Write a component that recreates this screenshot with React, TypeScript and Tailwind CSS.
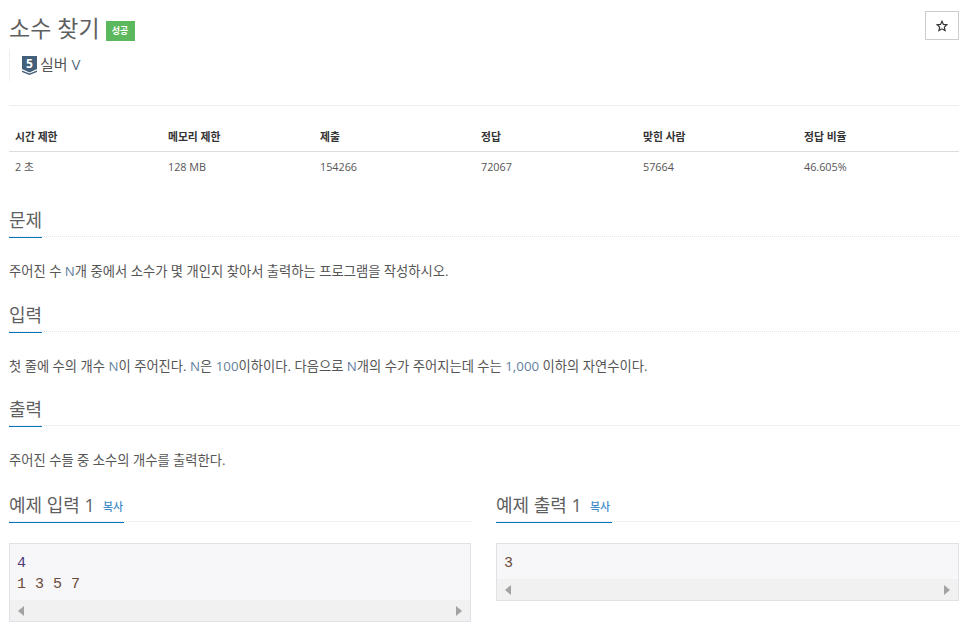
const font = "font-['Open_Sans','Noto_Sans_CJK_KR',sans-serif]"

const stats = [
  { label: "시간 제한", value: "2 초", width: "w-[153px]" },
  { label: "메모리 제한", value: "128 MB", width: "w-[152px]" },
  { label: "제출", value: "154266", width: "w-[161px]" },
  { label: "정답", value: "72067", width: "w-[162px]" },
  { label: "맞힌 사람", value: "57664", width: "w-[161px]" },
  { label: "정답 비율", value: "46.605%", width: "flex-1" },
]

function Headline({ title, accent, copy }: { title: string; accent: string; copy?: boolean }) {
  return (
    <div className="border-b border-dotted border-[#e5e5e5]">
      <h2 className={`-mb-[2px] block whitespace-nowrap border-b border-[#0076c0] text-[18px] leading-[28px] text-[#5f5f5f] ${copy ? "pb-[1px]" : "pb-[3px]"} ${accent}`}>
        {title}
        {copy && <a className="ml-2 align-[1px] text-[11px] font-medium text-[#428bca]">복사</a>}
      </h2>
    </div>
  )
}

function Num({ children }: { children: string }) {
  return <span className="text-[#5f7f9f]">{children}</span>
}

function Arrow({ flip }: { flip?: boolean }) {
  return (
    <svg width="6" height="10" viewBox="0 0 6 10" className={flip ? "rotate-180" : ""}>
      <path d="M6 0v10L0 5z" fill="#a3a3a3" />
    </svg>
  )
}

function Sample({ lines }: { lines: string[] }) {
  return (
    <div className="mt-[21px] border border-[#e1e1e8] bg-[#f7f7f9]">
      <pre className="px-[7px] pb-[5px] pt-[9px] font-['Liberation_Mono',monospace] text-[15px] leading-[21px] text-[#333333]">
        {lines.map((line, i) => (
          <div key={i} className={i === 0 && lines.length > 1 ? "text-[#4b3a7c]" : "text-[#6b4a3a]"}>{line}</div>
        ))}
      </pre>
      <div className="flex h-[21px] items-center justify-between bg-[#f1f1f1] px-[8px]">
        <Arrow />
        <Arrow flip />
      </div>
    </div>
  )
}

export default function App() {
  return (
    <div className={`${font} min-h-[638px] w-[980px] overflow-hidden bg-white px-[9px] pt-[9px] text-[#555555]`}>
      <div className="w-[950px]">
        <div className="flex items-start justify-between">
          <div className="flex h-[37px] items-center">
            <h1 className="text-[23px] leading-[36px] text-[#5f5f5f]">소수 찾기</h1>
            <span className="ml-[6px] mt-[6px] flex h-[20px] w-[29px] items-center justify-center bg-[#5cb85c] text-[9px] font-bold text-white">성공</span>
          </div>
          <button className="mt-[2px] flex h-[29px] w-[34px] items-center justify-center border border-[#cccccc] bg-white text-[#333333]">
            <svg width="12" height="12" viewBox="0 0 24 24" fill="none" stroke="#333" strokeWidth="2.4">
              <path d="M12 2.5l2.9 6.3 6.9.8-5.1 4.7 1.4 6.8-6.1-3.4-6.1 3.4 1.4-6.8-5.1-4.7 6.9-.8z" />
            </svg>
          </button>
        </div>

        <div className="mt-[3px] flex h-[32px] items-center border-l border-[#eeeeee] pl-[12px]">
          <svg width="15" height="19" viewBox="0 0 15 19">
            <path d="M0 0h15v13l-7.5 3.5L0 13z" fill="#435f7a" />
            <path d="M0 14.5l7.5 3 7.5-3V16l-7.5 3L0 16z" fill="#435f7a" />
            <text x="7.5" y="11.5" textAnchor="middle" fontSize="12" fontWeight="700" fill="#fff" fontFamily="Open Sans">5</text>
          </svg>
          <span className="ml-[3px] pb-[2px] text-[15px] text-[#555555]">실버 <span className="text-[#5a6f85]">V</span></span>
        </div>

        <div className="mt-[24px] border-t border-[#eeeeee]" />

        <div className="mt-[19px]">
          <div className="flex h-[27px] items-center border-b border-[#dddddd] pb-[2px] text-[10.8px] font-bold text-[#333333]">
            {stats.map((s) => (
              <div key={s.label} className={`${s.width} px-[6px]`}>{s.label}</div>
            ))}
          </div>
          <div className="flex h-[32px] items-center pb-[2px] text-[10.8px] text-[#555555]">
            {stats.map((s) => (
              <div key={s.label} className={`${s.width} px-[6px]`}>{s.value}</div>
            ))}
          </div>
        </div>

        <section className="mt-[22px]">
          <Headline title="문제" accent="w-[33px]" />
          <p className="mt-[24px] text-[13.3px] leading-[20px]">주어진 수 <Num>N</Num>개 중에서 소수가 몇 개인지 찾아서 출력하는 프로그램을 작성하시오.</p>
        </section>

        <section className="mt-[20px]">
          <Headline title="입력" accent="w-[33px]" />
          <p className="mt-[24px] text-[13.3px] leading-[20px]">첫 줄에 수의 개수 <Num>N</Num>이 주어진다. <Num>N</Num>은 <Num>100</Num>이하이다. 다음으로 <Num>N</Num>개의 수가 주어지는데 수는 <Num>1,000</Num> 이하의 자연수이다.</p>
        </section>

        <section className="mt-[19px]">
          <Headline title="출력" accent="w-[33px]" />
          <p className="mt-[24px] text-[13.3px] leading-[20px]">주어진 수들 중 소수의 개수를 출력한다.</p>
        </section>

        <div className="mt-[21px] flex gap-[25px]">
          <div className="w-[462px]">
            <Headline title="예제 입력 1" accent="w-[115px]" copy />
            <Sample lines={["4", "1 3 5 7"]} />
          </div>
          <div className="w-[463px]">
            <Headline title="예제 출력 1" accent="w-[116px]" copy />
            <Sample lines={["3"]} />
          </div>
        </div>
      </div>
    </div>
  )
}
